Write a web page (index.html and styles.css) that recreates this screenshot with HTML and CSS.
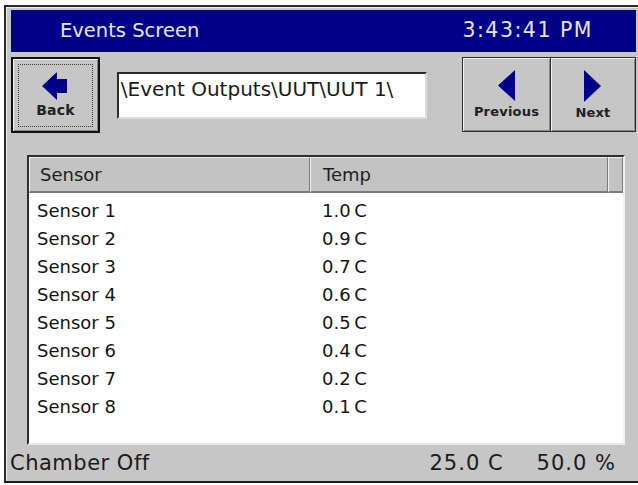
FILE: index.html
```html
<!DOCTYPE html>
<html lang="en">
<head>
<meta charset="utf-8">
<title>Events Screen</title>
<link rel="stylesheet" href="styles.css">
</head>
<body>
<div class="window">
  <header class="titlebar">
    <span class="title">Events Screen</span>
    <span class="clock">3:43:41 PM</span>
  </header>

  <div class="toolbar">
    <button class="btn btn-back" type="button">
      <svg class="icon-back" width="26" height="29" viewBox="0 0 26 29" aria-hidden="true">
        <polygon points="0,14 15,0 15,7 25,7 25,21 15,21 15,28" fill="#000088"/>
      </svg>
      <span class="btn-label">Back</span>
    </button>
    <div class="path-field">\Event Outputs\UUT\UUT 1\</div>
    <div class="nav-group">
      <button class="btn btn-nav" type="button">
        <svg width="18" height="31" viewBox="0 0 18 31" aria-hidden="true">
          <polygon points="0,15.5 17,0 17,31" fill="#000088"/>
        </svg>
        <span class="btn-label">Previous</span>
      </button>
      <button class="btn btn-nav" type="button">
        <svg width="18" height="32" viewBox="0 0 18 32" aria-hidden="true">
          <polygon points="0,0 17,16 0,32" fill="#000088"/>
        </svg>
        <span class="btn-label">Next</span>
      </button>
    </div>
  </div>

  <div class="list">
    <div class="list-head">
      <div class="col-head col-sensor">Sensor</div>
      <div class="col-head col-temp">Temp</div>
      <div class="col-head col-fill"></div>
    </div>
    <div class="list-body">
      <div class="row"><span class="cell-sensor">Sensor 1</span><span class="cell-temp">1.0 C</span></div>
      <div class="row"><span class="cell-sensor">Sensor 2</span><span class="cell-temp">0.9 C</span></div>
      <div class="row"><span class="cell-sensor">Sensor 3</span><span class="cell-temp">0.7 C</span></div>
      <div class="row"><span class="cell-sensor">Sensor 4</span><span class="cell-temp">0.6 C</span></div>
      <div class="row"><span class="cell-sensor">Sensor 5</span><span class="cell-temp">0.5 C</span></div>
      <div class="row"><span class="cell-sensor">Sensor 6</span><span class="cell-temp">0.4 C</span></div>
      <div class="row"><span class="cell-sensor">Sensor 7</span><span class="cell-temp">0.2 C</span></div>
      <div class="row"><span class="cell-sensor">Sensor 8</span><span class="cell-temp">0.1 C</span></div>
    </div>
  </div>

  <footer class="statusbar">
    <span class="status-state">Chamber Off</span>
    <span class="status-readings">
      <span>25.0 C</span>
      <span>50.0 %</span>
    </span>
  </footer>
</div>
</body>
</html>
```

FILE: styles.css
```css
* {
  box-sizing: border-box;
}

html, body {
  margin: 0;
  padding: 0;
  background: #ffffff;
}

body {
  width: 638px;
  height: 485px;
  overflow: hidden;
  font-family: "DejaVu Sans", Verdana, sans-serif;
  color: #1e1e1e;
}

/* outer panel */
.window {
  margin: 5px 0 0 4px;
  width: 634px;
  height: 478px;
  background: #c6c6c6;
  border-top: 2px solid #2a2a2a;
  border-left: 2px solid #2a2a2a;
  border-bottom: 2px solid #1a1a1a;
  box-shadow: inset 1px 1px 0 #ececec;
  display: flex;
  flex-direction: column;
}

/* blue caption strip */
.titlebar {
  margin: 3px 2px 0 5px;
  height: 42px;
  background: #000088;
  color: #e6e6ee;
  display: flex;
  align-items: center;
  justify-content: space-between;
  padding: 0 43px 2px 49px;
  font-size: 19.5px;
}

.clock {
  font-size: 20.5px;
  letter-spacing: 1.5px;
}

/* button row */
.toolbar {
  display: flex;
  align-items: flex-start;
  padding: 5px 2px 0 5px;
  height: 81px;
}

.btn {
  font-family: "DejaVu Sans", Verdana, sans-serif;
  background: #c6c6c6;
  color: #202020;
  padding: 0;
  margin: 0;
  display: flex;
  flex-direction: column;
  align-items: center;
  cursor: pointer;
}

.btn svg {
  display: block;
}

.btn-label {
  font-size: 13px;
  font-weight: bold;
  line-height: 16px;
  letter-spacing: 0.2px;
}

.btn-back {
  position: relative;
  width: 89px;
  height: 76px;
  border: 2px solid #101010;
  box-shadow: inset 1px 1px 0 #f4f4f4, inset -1px -1px 0 #8a8a8a;
  padding-top: 13px;
}

.btn-back .btn-label {
  margin-top: 1px;
  font-size: 14px;
}

/* keyboard focus ring */
.btn-back::after {
  content: "";
  position: absolute;
  left: 5px;
  top: 5px;
  right: 5px;
  bottom: 4px;
  border: 1px dotted #3a3a3a;
}

.path-field {
  margin: 15px 0 0 17px;
  width: 311px;
  height: 47px;
  background: #ffffff;
  border-top: 2px solid #2a2a2a;
  border-left: 2px solid #2a2a2a;
  border-right: 2px solid #dcdcdc;
  border-bottom: 2px solid #dcdcdc;
  font-size: 20px;
  line-height: 22px;
  padding: 4px 0 0 2px;
  white-space: nowrap;
  color: #1a1a1a;
}

.nav-group {
  margin-left: 35px;
  display: flex;
}

.btn-nav {
  height: 75px;
  border: 1px solid #2a2a2a;
  box-shadow: inset 1px 1px 0 #f4f4f4, inset -1px -1px 0 #8a8a8a;
  padding-top: 12px;
}

.btn-nav:first-child {
  width: 89px;
}

.btn-nav:last-child {
  width: 85px;
  border-left: none;
}

.btn-nav .btn-label {
  margin-top: 3px;
}

/* sensor table */
.list {
  margin: 22px 0 0 21px;
  width: 598px;
  height: 290px;
  border-top: 2px solid #2e2e2e;
  border-left: 2px solid #2e2e2e;
  border-right: 2px solid #f2f2f2;
  border-bottom: 2px solid #e8e8e8;
  background: #ffffff;
  display: flex;
  flex-direction: column;
}

.list-head {
  display: flex;
  height: 36px;
  background: #c3c3c3;
}

.col-head {
  font-size: 18px;
  line-height: 34px;
  border-top: 1px solid #efefef;
  border-left: 1px solid #efefef;
  border-right: 1px solid #7c7c7c;
  border-bottom: 2px solid #7c7c7c;
  white-space: nowrap;
}

.col-sensor {
  width: 281px;
  padding-left: 10px;
}

.col-temp {
  width: 298px;
  padding-left: 12px;
}

.col-fill {
  flex: 1;
}

.list-body {
  flex: 1;
  padding-top: 3px;
  margin-right: 1px;
}

.row {
  display: flex;
  height: 28px;
  align-items: center;
  font-size: 18px;
  color: #141414;
}

.cell-sensor {
  width: 285px;
  padding-left: 8px;
}

.cell-temp {
  padding-left: 8px;
  word-spacing: -2px;
}

/* bottom status line */
.statusbar {
  flex: 1;
  display: flex;
  align-items: center;
  justify-content: space-between;
  padding: 0 22px 0 4px;
  font-size: 21px;
  color: #1a1a1a;
}

.status-state {
  letter-spacing: 0.5px;
}

.status-readings {
  display: flex;
  gap: 33px;
  letter-spacing: 1px;
}
```
